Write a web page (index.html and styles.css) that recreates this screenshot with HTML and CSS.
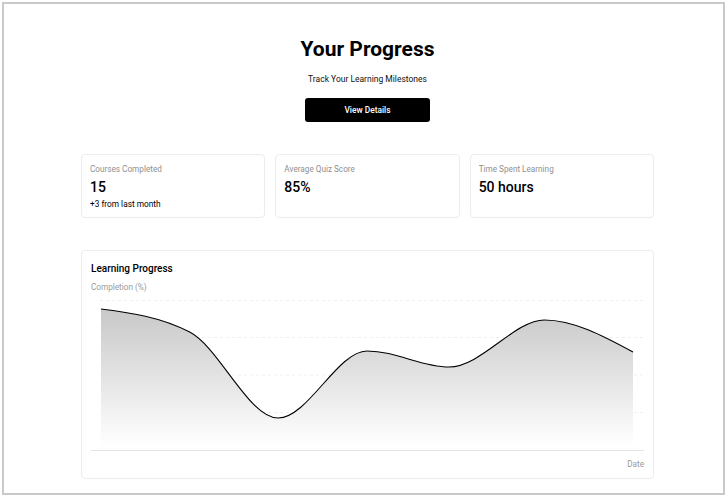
FILE: index.html
```html
<!DOCTYPE html>
<html>
<head>
<meta charset="utf-8">
<link rel="stylesheet" href="styles.css">
</head>
<body>
<div class="frame">
  <main class="page">
    <header class="hero">
      <h1 class="title">Your Progress</h1>
      <p class="subtitle">Track Your Learning Milestones</p>
      <button class="btn">View Details</button>
    </header>

    <section class="stats">
      <div class="card stat">
        <div class="stat-label">Courses Completed</div>
        <div class="stat-value">15</div>
        <div class="stat-note">+3 from last month</div>
      </div>
      <div class="card stat">
        <div class="stat-label">Average Quiz Score</div>
        <div class="stat-value">85%</div>
      </div>
      <div class="card stat">
        <div class="stat-label">Time Spent Learning</div>
        <div class="stat-value">50 hours</div>
      </div>
    </section>

    <section class="card chart-card">
      <h2 class="chart-title">Learning Progress</h2>
      <div class="axis-label">Completion (%)</div>
      <svg class="chart" width="553" height="158" viewBox="0 0 553 158">
        <defs>
          <linearGradient id="fillGrad" x1="0" y1="0" x2="0" y2="1">
            <stop offset="0" stop-color="#c8c8c8"/>
            <stop offset="1" stop-color="#ffffff"/>
          </linearGradient>
        </defs>
        <g class="grid">
          <line x1="9" y1="4.5" x2="553" y2="4.5"/>
          <line x1="9" y1="41.5" x2="553" y2="41.5"/>
          <line x1="9" y1="79" x2="553" y2="79"/>
          <line x1="9" y1="116.5" x2="553" y2="116.5"/>
        </g>
        <path class="area" d="M10,13 C39.57,16.8 69.13,20.7 98.7,36 C128.27,51.3 157.73,122 187.3,122 C216.87,122 246.43,55 276,55 C305.57,55 330,71 358,71 C390,71 423.73,24 453.3,24 C482.87,24 512.43,40 542,56 L542,150 L10,150 Z"/>
        <path class="line" d="M10,13 C39.57,16.8 69.13,20.7 98.7,36 C128.27,51.3 157.73,122 187.3,122 C216.87,122 246.43,55 276,55 C305.57,55 330,71 358,71 C390,71 423.73,24 453.3,24 C482.87,24 512.43,40 542,56"/>
        <line class="axis" x1="0" y1="154.5" x2="553" y2="154.5"/>
      </svg>
      <div class="x-label">Date</div>
    </section>
  </main>
</div>
</body>
</html>
```

FILE: styles.css
```css
* { box-sizing: border-box; }

html, body {
  margin: 0;
  padding: 0;
  background: #ffffff;
}

body {
  font-family: Roboto, "Liberation Sans", Arial, sans-serif;
  color: #000;
}

.frame {
  margin: 2px 1px 0 2px;
  height: 493px;
  border: 2px solid #c9c9c9;
  padding-left: 8px;
  overflow: hidden;
}

.page {
  width: 573px;
  margin: 0 auto;
  padding-top: 32px;
}

.hero {
  display: flex;
  flex-direction: column;
  align-items: center;
}

.title {
  margin: 0;
  font-size: 21px;
  line-height: 26px;
  font-weight: 700;
}

.subtitle {
  margin: 12px 0 0;
  font-size: 8.5px;
  line-height: 10px;
  color: #111;
}

.btn {
  margin-top: 14px;
  width: 125px;
  height: 24px;
  border: none;
  border-radius: 3px;
  background: #000;
  color: #fff;
  font-family: inherit;
  font-size: 8.4px;
  font-weight: 500;
}

.stats {
  margin-top: 32px;
  display: grid;
  grid-template-columns: repeat(3, 1fr);
  gap: 10px;
}

.card {
  border: 1px solid #ececec;
  border-radius: 4px;
  background: #fff;
}

.stat {
  height: 64px;
  padding: 9px 8px;
}

.stat-label {
  font-size: 8.2px;
  line-height: 10px;
  color: #8f8f8f;
}

.stat-value {
  margin-top: 5px;
  font-size: 14px;
  line-height: 17px;
  font-weight: 500;
}

.stat-note {
  margin-top: 3px;
  font-size: 8.3px;
  line-height: 10px;
}

.chart-card {
  margin-top: 32px;
  height: 229px;
  padding: 11px 9px 0 9px;
}

.chart-title {
  margin: 0;
  font-size: 10px;
  line-height: 13px;
  font-weight: 500;
}

.axis-label {
  margin-top: 7px;
  font-size: 8.2px;
  line-height: 10px;
  color: #9a9a9a;
}

.chart {
  display: block;
  margin-top: 4px;
}

.grid line {
  stroke: #efefef;
  stroke-width: 1;
  stroke-dasharray: 3 3;
}

.area {
  fill: url(#fillGrad);
}

.line {
  fill: none;
  stroke: #000;
  stroke-width: 1.1;
}

.axis {
  stroke: #e4e4e4;
  stroke-width: 1;
}

.x-label {
  margin-top: 5px;
  text-align: right;
  font-size: 8.2px;
  line-height: 10px;
  color: #9a9a9a;
}
```
